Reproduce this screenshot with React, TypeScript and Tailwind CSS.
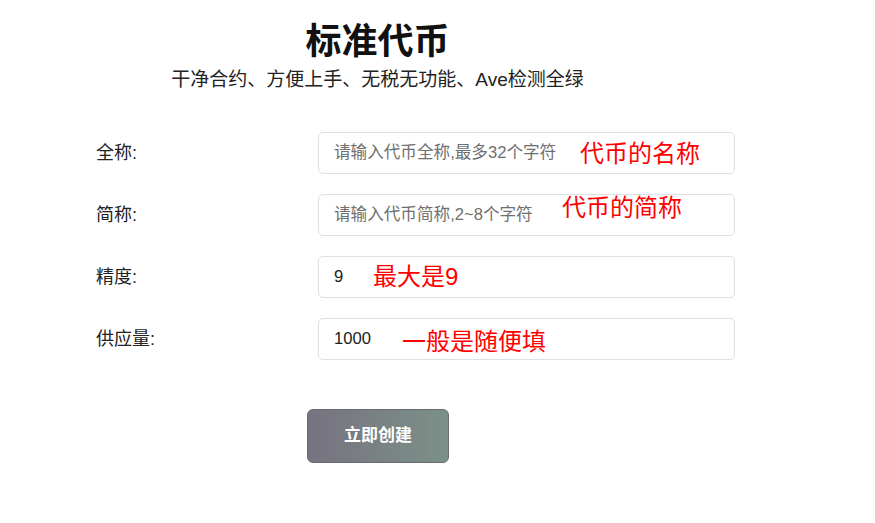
import { useState } from 'react';

const font = 'font-["Liberation_Sans","Noto_Sans_CJK_SC",sans-serif]';

interface FieldProps {
  label: string;
  placeholder?: string;
  value: string;
  onChange: (v: string) => void;
  note: string;
  noteClass: string;
}

const Field = ({ label, placeholder, value, onChange, note, noteClass }: FieldProps) => (
  <div className="flex items-center h-[42px]">
    <label className="w-[222px] shrink-0 text-[18px] text-[#222]">{label}</label>
    <div className="relative w-[417px] h-full">
      <input
        value={value}
        placeholder={placeholder}
        onChange={(e) => onChange(e.target.value)}
        className="w-full h-full rounded-[5px] border border-[#dcdfe6] bg-white pl-[15px] pr-3 text-[16.6px] text-[#222] placeholder:text-[#6f6f6f] outline-none"
      />
      {/* red hint pasted over the input */}
      <span className={`absolute pointer-events-none text-[24px] leading-none text-[#ff0000] ${noteClass}`}>
        {note}
      </span>
    </div>
  </div>
);

const App = () => {
  const [name, setName] = useState('');
  const [symbol, setSymbol] = useState('');
  const [decimals, setDecimals] = useState('9');
  const [supply, setSupply] = useState('1000');

  return (
    <div className={`min-h-[523px] w-[875px] bg-white ${font}`}>
      {/* header */}
      <div className="w-[755px] pt-[21px] text-center">
        <h1 className="text-[36px] leading-[42px] font-bold text-[#111]">标准代币</h1>
        <p className="mt-[5px] text-[19px] leading-[24px] text-[#222]">干净合约、方便上手、无税无功能、Ave检测全绿</p>
      </div>

      {/* form */}
      <div className="mt-[40px] pl-[96px] flex flex-col gap-[20px]">
        <Field
          label="全称:"
          placeholder="请输入代币全称,最多32个字符"
          value={name}
          onChange={setName}
          note="代币的名称"
          noteClass="left-[262px] top-[10px]"
        />
        <Field
          label="简称:"
          placeholder="请输入代币简称,2~8个字符"
          value={symbol}
          onChange={setSymbol}
          note="代币的简称"
          noteClass="left-[244px] top-[2px]"
        />
        <Field
          label="精度:"
          value={decimals}
          onChange={setDecimals}
          note="最大是9"
          noteClass="left-[55px] top-[9px]"
        />
        <Field
          label="供应量:"
          value={supply}
          onChange={setSupply}
          note="一般是随便填"
          noteClass="left-[84px] top-[12px]"
        />
      </div>

      <div className="mt-[49px] pl-[307px]">
        <button className="w-[142px] h-[54px] rounded-[6px] border border-[#6a6a72] bg-gradient-to-r from-[#77727f] to-[#7b9188] text-[17px] font-bold text-white">
          立即创建
        </button>
      </div>
    </div>
  );
};

export default App;
